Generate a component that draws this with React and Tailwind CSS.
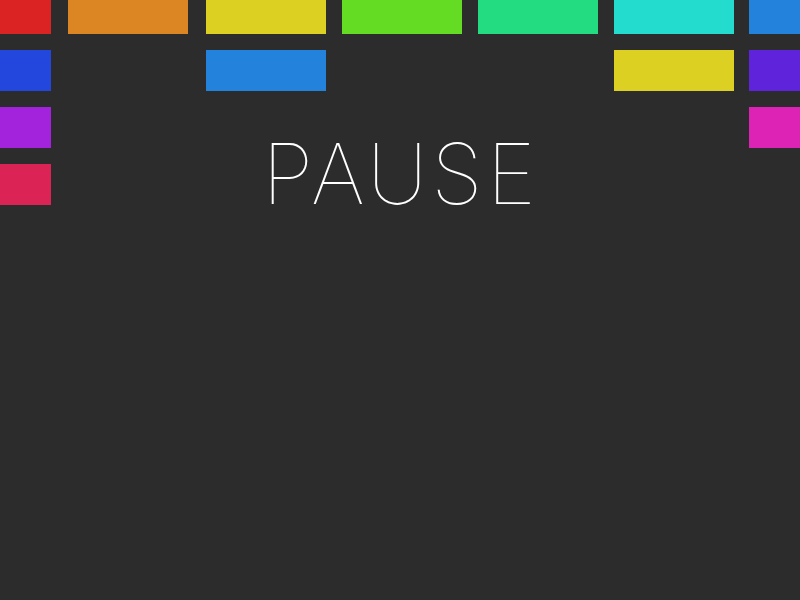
import React from "react";

const rows = [
  ["bg-[#dc2323]", "bg-[#dc8623]", "bg-[#dcd023]", "bg-[#64dc23]", "bg-[#23dc82]", "bg-[#23dccd]", "bg-[#2383dc]"],
  ["bg-[#2347dc]", null, "bg-[#2383dc]", null, null, "bg-[#dcd023]", "bg-[#5f23dc]"],
  ["bg-[#a323dc]", null, null, null, null, null, "bg-[#dc23b5]"],
  ["bg-[#dc2356]", null, null, null, null, null, null],
];

export default function App() {
  return (
    <div className="relative w-[800px] h-[600px] overflow-hidden bg-[#2c2c2c]">
      {/* brick wall */}
      <div className="grid grid-cols-[68px_138px_136px_136px_136px_135px_51px] grid-rows-[34px_41px_41px_41px] gap-y-4">
        {rows.flatMap((row, r) =>
          row.map((color, c) => (
            <div key={`${r}-${c}`} className="h-full">
              {color && (
                <div className={`h-full ${c === 0 || c === 6 ? "w-[51px]" : "w-[120px]"} ${color}`} />
              )}
            </div>
          ))
        )}
      </div>

      {/* pause overlay */}
      <div className="absolute inset-x-0 top-[132px] flex justify-center">
        <span
          className="text-white font-thin leading-none text-[84px] tracking-[4px] pl-[2px]"
          style={{ fontFamily: "Inter, 'Liberation Sans', sans-serif" }}
        >
          PAUSE
        </span>
      </div>
    </div>
  );
}
